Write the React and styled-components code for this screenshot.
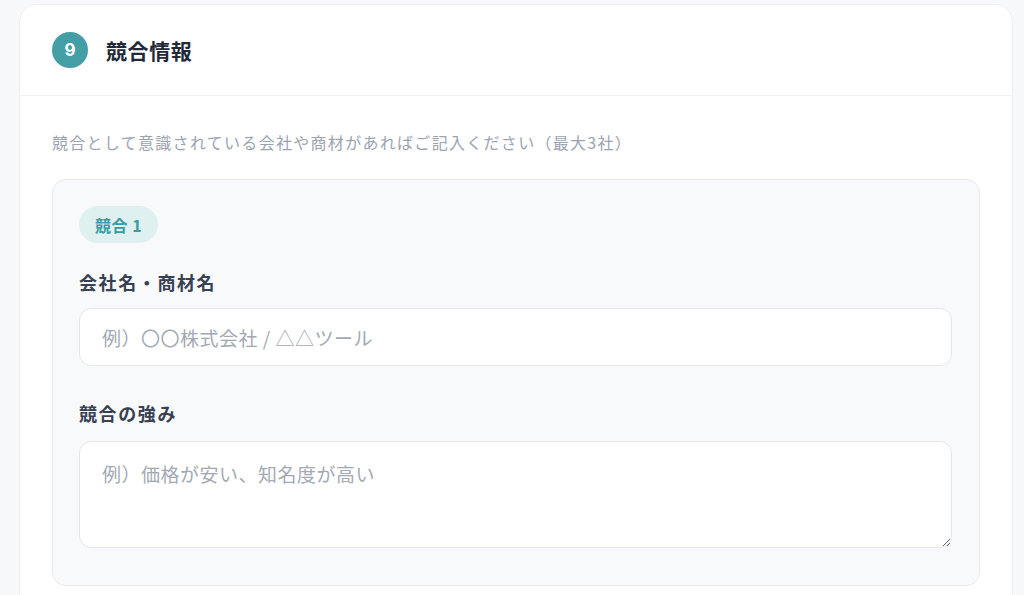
import styled, { createGlobalStyle } from "styled-components"

const GlobalStyle = createGlobalStyle`
  html, body {
    margin: 0;
    overflow: hidden;
    background: #f7f8fa;
  }
  body {
    font-family: "Noto Sans CJK JP", "Noto Sans", sans-serif;
    color: #1f2937;
  }
  * { box-sizing: border-box; }
`

const Page = styled.div`
  padding: 4px 11px 0 19px;
`

const Card = styled.section`
  background: #ffffff;
  border: 1px solid #eceef1;
  border-radius: 18px;
`

const CardHeader = styled.header`
  display: flex;
  align-items: center;
  gap: 18px;
  padding: 27px 32px;
  border-bottom: 1px solid #f0f1f4;
`

const StepBadge = styled.span`
  width: 36px;
  height: 36px;
  border-radius: 50%;
  background: #449ea5;
  color: #ffffff;
  display: flex;
  align-items: center;
  justify-content: center;
  font-family: "Inter", "Noto Sans", sans-serif;
  font-size: 17px;
  font-weight: 700;
`

const Title = styled.h2`
  margin: 0;
  font-size: 21px;
  font-weight: 700;
  letter-spacing: 0.6px;
  color: #1f2937;
`

const CardBody = styled.div`
  padding: 34px 32px 40px;
`

const Description = styled.p`
  margin: 0 0 25px;
  font-size: 16px;
  line-height: 24px;
  letter-spacing: 1.3px;
  color: #9ca3af;
`

const CompetitorBox = styled.div`
  background: #f8f9fb;
  border: 1px solid #e8eaee;
  border-radius: 14px;
  padding: 26px 27px 37px 26px;
`

const Pill = styled.span`
  display: inline-flex;
  align-items: center;
  height: 37px;
  padding: 0 16px;
  border-radius: 999px;
  background: #dff0f1;
  color: #3a9ba2;
  font-size: 16px;
  font-weight: 700;
  letter-spacing: 0.5px;
`

const Field = styled.div`
  display: flex;
  flex-direction: column;
  margin-top: ${(p) => p.$top}px;
`

const Label = styled.label`
  font-size: 18px;
  line-height: 28px;
  font-weight: 700;
  letter-spacing: 1.6px;
  color: #374151;
  margin-bottom: ${(p) => p.$gap}px;
`

const fieldStyles = `
  width: 100%;
  border: 1px solid #e3e6ea;
  border-radius: 12px;
  background: #ffffff;
  font-family: "Noto Sans CJK JP", "Noto Sans", sans-serif;
  font-size: 19px;
  letter-spacing: 0.5px;
  color: #1f2937;
  outline: none;
  &::placeholder { color: #a3a9b3; }
`

const TextInput = styled.input`
  ${fieldStyles}
  height: 58px;
  padding: 0 22px;
`

const TextArea = styled.textarea`
  ${fieldStyles}
  display: block;
  height: 107px;
  padding: 18px 22px;
  line-height: 28px;
  resize: vertical;
`

export default function App() {
  return (
    <>
      <GlobalStyle />
      <Page>
        <Card>
          <CardHeader>
            <StepBadge>9</StepBadge>
            <Title>競合情報</Title>
          </CardHeader>
          <CardBody>
            <Description>
              競合として意識されている会社や商材があればご記入ください（最大3社）
            </Description>
            <CompetitorBox>
              <Pill>競合 1</Pill>
              <Field $top={25}>
                <Label $gap={12}>会社名・商材名</Label>
                <TextInput placeholder="例）〇〇株式会社 / △△ツール" />
              </Field>
              <Field $top={33}>
                <Label $gap={14}>競合の強み</Label>
                <TextArea placeholder="例）価格が安い、知名度が高い" />
              </Field>
            </CompetitorBox>
          </CardBody>
        </Card>
      </Page>
    </>
  )
}
